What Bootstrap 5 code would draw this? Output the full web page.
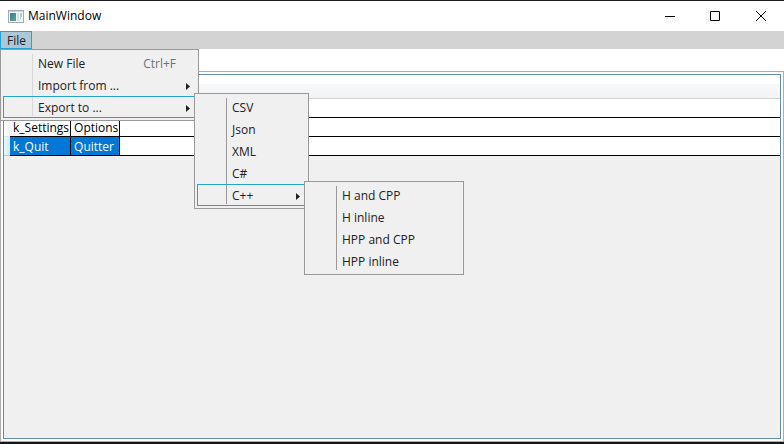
<!DOCTYPE html>
<html lang="en">
<head>
<meta charset="utf-8">
<meta name="viewport" content="width=device-width, initial-scale=1">
<title>MainWindow</title>
<link href="https://cdn.jsdelivr.net/npm/bootstrap@5.3.0/dist/css/bootstrap.min.css" rel="stylesheet">
<style>
body { font: 12px/18px "Segoe UI", "Open Sans", "Noto Sans", sans-serif; color: #212121; background: #fff; }
.app-window { border-top: 1px solid #1e1c1e; border-bottom: 2px solid #161416; }
.title-bar { height: 30px; color: #000; }
.caption-btn { width: 45px; border: 0; background: transparent; color: #000; }
.caption-btn:hover { background: #e5e5e5; }
.menu-strip { background: #d3d3d3; height: 18px; }
.menu-top { border: 1px solid #26a0da; background: #a9c9d8; color: #212121; padding: 0 5px 0 6px; line-height: 17px; height: 18px; display: block; }
.menu-pop { position: absolute; display: block; margin: 0; padding: 2px; border: 1px solid #999; border-radius: 0; background: #f0f0f0; font-size: 12px; color: #212121; min-width: 0; z-index: 10; }
.menu-pop::before { content: ""; position: absolute; left: 31px; top: 4px; bottom: 4px; width: 1px; background: #999; }
.menu-file::before { background: #d7d7d7; }
.menu-file { width: 199px; top: 100%; left: 0; }
.menu-formats { width: 115px; }
.menu-cpp { width: 160px; }
.menu-sub { top: -3px; left: calc(100% - 2px); }
.menu-entry { display: flex; align-items: center; width: 100%; height: 22px; padding: 2px 5px 0 34px; border: 1px solid transparent; background: transparent; color: #212121; text-align: left; line-height: 18px; }
.menu-entry:hover, .menu-entry.is-open { border-color: #26a0da; }
.shortcut { color: #707070; padding-right: 14px; }
.pane-outer { border: 1px solid #acacac; border-top-color: #abada5; margin-top: 22px; padding: 2px; }
.data-pane { border: 1px solid #688caf; background: #f0f0f0; }
.data-grid { width: 100%; border-collapse: separate; border-spacing: 0; background: #fff; color: #000; line-height: 17px; }
.data-grid thead th { height: 24px; padding: 0; border-bottom: 1px solid #d5d5d5; background: linear-gradient(#fff 0 9px, #f7f8fa 9px, #f2f3f4); }
.data-grid tbody td { height: 19px; padding: 1px 1px 0 3px; border-right: 1px solid #000; border-bottom: 1px solid #000; white-space: nowrap; }
.data-grid tbody td:last-child { border-right: 0; }
.data-grid tbody th { width: 6px; padding: 0; border-bottom: 1px solid #dfe3e8; background: linear-gradient(90deg, #fff, #f0f2f4); }
.data-grid .col-key { width: 61px; }
.data-grid .col-value { width: 49px; }
.data-grid .is-selected th { background: linear-gradient(90deg, #e4f5fd, #d5effc); border-color: #8fd5f3; }
.data-grid .is-selected .cell-on { background: #0078d7; color: #fff; }
</style>
<script src="https://cdn.jsdelivr.net/npm/bootstrap@5.3.0/dist/js/bootstrap.bundle.min.js"></script>
</head>
<body>
<div class="app-window d-flex flex-column min-vh-100">
  <header class="title-bar d-flex align-items-stretch flex-shrink-0">
    <div class="d-flex align-items-center flex-grow-1 ps-2">
      <svg width="16" height="13" viewBox="0 0 16 13" aria-hidden="true" shape-rendering="crispEdges">
        <defs><linearGradient id="appFill" x1="0" y1="0" x2="1" y2="1"><stop offset="0" stop-color="#3d7fa8"/><stop offset="1" stop-color="#58a67c"/></linearGradient></defs>
        <rect x=".5" y=".5" width="15" height="12" fill="#f4f5f6" stroke="#a5adb3"/>
        <rect x="1" y="1" width="14" height="1" fill="#cdd3d8"/>
        <rect x="2" y="3" width="6" height="8" fill="url(#appFill)"/>
        <rect x="9" y="3" width="2" height="8" fill="#dce1e4"/>
        <path d="M12 3h2v4h-1v2h-1z" fill="#a9cfc9"/>
      </svg>
      <span class="ms-1">MainWindow</span>
    </div>
    <button type="button" class="caption-btn p-0" aria-label="Minimize"><svg class="d-block mx-auto" width="13" height="11"><path d="M0 5.5h10" stroke="#000"/></svg></button>
    <button type="button" class="caption-btn p-0" aria-label="Maximize"><svg class="d-block mx-auto" width="13" height="11"><path d="M.5 .5h9v9h-9z" fill="none" stroke="#000"/></svg></button>
    <button type="button" class="caption-btn p-0" aria-label="Close"><svg class="d-block mx-auto" width="13" height="11"><path d="M1 0l10 10M11 0l-10 10" stroke="#000"/></svg></button>
  </header>

  <nav class="menu-strip d-flex flex-shrink-0" aria-label="Main menu">
    <div class="position-relative">
      <button type="button" class="menu-top" aria-expanded="true">File</button>
      <ul class="dropdown-menu show menu-pop menu-file">
        <li><button type="button" class="menu-entry"><span class="flex-grow-1">New File</span><span class="shortcut">Ctrl+F</span></button></li>
        <li><button type="button" class="menu-entry"><span class="flex-grow-1">Import from ...</span><svg width="4" height="7"><path d="M0 0l4 3.500-4 3.500z" fill="#212121"/></svg></button></li>
        <li class="position-relative">
          <button type="button" class="menu-entry is-open" aria-expanded="true"><span class="flex-grow-1">Export to ...</span><svg width="4" height="7"><path d="M0 0l4 3.500-4 3.500z" fill="#212121"/></svg></button>
          <ul class="dropdown-menu show menu-pop menu-sub menu-formats">
            <li><button type="button" class="menu-entry">CSV</button></li>
            <li><button type="button" class="menu-entry">Json</button></li>
            <li><button type="button" class="menu-entry">XML</button></li>
            <li><button type="button" class="menu-entry">C#</button></li>
            <li class="position-relative">
              <button type="button" class="menu-entry is-open" aria-expanded="true"><span class="flex-grow-1">C++</span><svg width="4" height="7"><path d="M0 0l4 3.500-4 3.500z" fill="#212121"/></svg></button>
              <ul class="dropdown-menu show menu-pop menu-sub menu-cpp">
                <li><button type="button" class="menu-entry">H and CPP</button></li>
                <li><button type="button" class="menu-entry">H inline</button></li>
                <li><button type="button" class="menu-entry">HPP and CPP</button></li>
                <li><button type="button" class="menu-entry">HPP inline</button></li>
              </ul>
            </li>
          </ul>
        </li>
      </ul>
    </div>
  </nav>

  <main class="pane-outer d-flex flex-column flex-grow-1">
    <div class="data-pane flex-grow-1">
      <table class="data-grid">
        <thead><tr><th></th><th class="col-key"></th><th class="col-value"></th><th></th></tr></thead>
        <tbody>
          <tr><th></th><td></td><td></td><td></td></tr>
          <tr><th></th><td>k_Settings</td><td>Options</td><td></td></tr>
          <tr class="is-selected"><th></th><td class="cell-on">k_Quit</td><td class="cell-on">Quitter</td><td></td></tr>
        </tbody>
      </table>
    </div>
  </main>
</div>
</body>
</html>
